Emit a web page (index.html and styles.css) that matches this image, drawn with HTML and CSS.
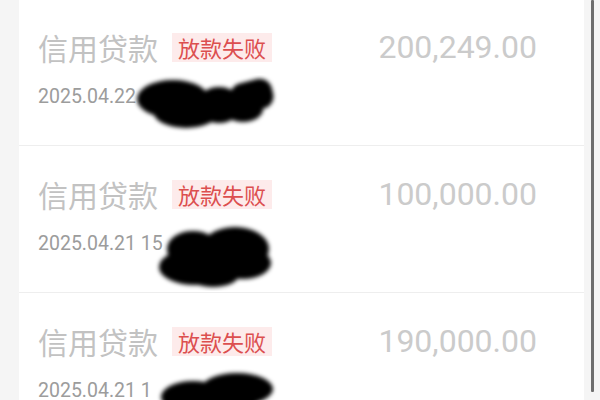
FILE: index.html
```html
<!DOCTYPE html>
<html lang="zh-CN">
<head>
<meta charset="utf-8">
<link rel="stylesheet" href="styles.css">
</head>
<body>
<div class="page">
  <div class="card">
    <div class="row">
      <div class="top">
        <span class="title">信用贷款</span>
        <span class="badge">放款失败</span>
        <span class="amount">200,249.00</span>
      </div>
      <div class="date">2025.04.22</div>
      <svg class="redact r1" width="160" height="60" viewBox="0 0 160 60">
        <defs><filter id="b1"><feGaussianBlur stdDeviation="2"/></filter></defs>
        <g filter="url(#b1)" fill="#000">
          <ellipse cx="42" cy="24" rx="36" ry="19"/>
          <ellipse cx="55" cy="38" rx="32" ry="15"/>
          <ellipse cx="88" cy="30" rx="22" ry="18"/>
          <rect x="100" y="6" width="42" height="30" rx="12" transform="rotate(-14 120 21)"/>
          <ellipse cx="112" cy="34" rx="20" ry="13"/>
        </g>
      </svg>
    </div>
    <div class="row">
      <div class="top">
        <span class="title">信用贷款</span>
        <span class="badge">放款失败</span>
        <span class="amount">100,000.00</span>
      </div>
      <div class="date">2025.04.21 15</div>
      <svg class="redact r2" width="130" height="72" viewBox="0 0 130 72">
        <defs><filter id="b2"><feGaussianBlur stdDeviation="2"/></filter></defs>
        <g filter="url(#b2)" fill="#000">
          <ellipse cx="40" cy="30" rx="26" ry="18"/>
          <ellipse cx="42" cy="48" rx="36" ry="18"/>
          <ellipse cx="82" cy="30" rx="34" ry="22"/>
          <ellipse cx="90" cy="44" rx="28" ry="16"/>
          <ellipse cx="60" cy="56" rx="26" ry="12"/>
        </g>
      </svg>
    </div>
    <div class="row">
      <div class="top">
        <span class="title">信用贷款</span>
        <span class="badge">放款失败</span>
        <span class="amount">190,000.00</span>
      </div>
      <div class="date">2025.04.21 1</div>
      <svg class="redact r3" width="130" height="50" viewBox="0 0 130 50">
        <defs><filter id="b3"><feGaussianBlur stdDeviation="2"/></filter></defs>
        <g filter="url(#b3)" fill="#000">
          <ellipse cx="40" cy="30" rx="32" ry="16"/>
          <ellipse cx="84" cy="22" rx="36" ry="16"/>
          <ellipse cx="60" cy="38" rx="44" ry="14"/>
        </g>
      </svg>
    </div>
  </div>
  <div class="scrollbar"></div>
</div>
</body>
</html>
```
FILE: styles.css
```css
html, body {
  margin: 0;
  padding: 0;
  background: #f5f5f5;
  overflow: hidden;
}
.page {
  position: relative;
  width: 600px;
  height: 400px;
  overflow: hidden;
}
.card {
  margin: -1px 16px 0 19px;
  background: #ffffff;
  height: 460px;
}
.row {
  position: relative;
  height: 146px;
  border-bottom: 1px solid #eeeeee;
  padding: 0 47px 0 19px;
  box-sizing: content-box;
}
.top {
  display: flex;
  align-items: center;
  height: 40px;
  padding-top: 28px;
}
.title {
  font-family: "Noto Sans CJK SC", "Noto Sans", sans-serif;
  font-size: 30px;
  color: #c2c2c2;
  line-height: 40px;
}
.badge {
  margin-left: 14px;
  background: #fdebeb;
  color: #dc4f4f;
  font-family: "Noto Sans CJK SC", "Noto Sans", sans-serif;
  font-size: 22px;
  line-height: 29px;
  padding: 0 6px;
}
.amount {
  margin-left: auto;
  font-family: Roboto, "Liberation Sans", sans-serif;
  font-weight: 400;
  font-size: 32px;
  color: #cbcbcb;
}
.date {
  margin-top: 18px;
  font-family: Roboto, "Liberation Sans", sans-serif;
  font-size: 19.5px;
  line-height: 24px;
  color: #9c9c9c;
}
.redact {
  position: absolute;
}
.r1 { left: 112px; top: 76px; }
.r2 { left: 134px; top: 73px; }
.r3 { left: 134px; top: 74px; }
.scrollbar {
  position: absolute;
  left: 591px;
  top: 0;
  width: 3px;
  height: 392px;
  background: #6e6e6e;
  border-radius: 1px;
}
```
